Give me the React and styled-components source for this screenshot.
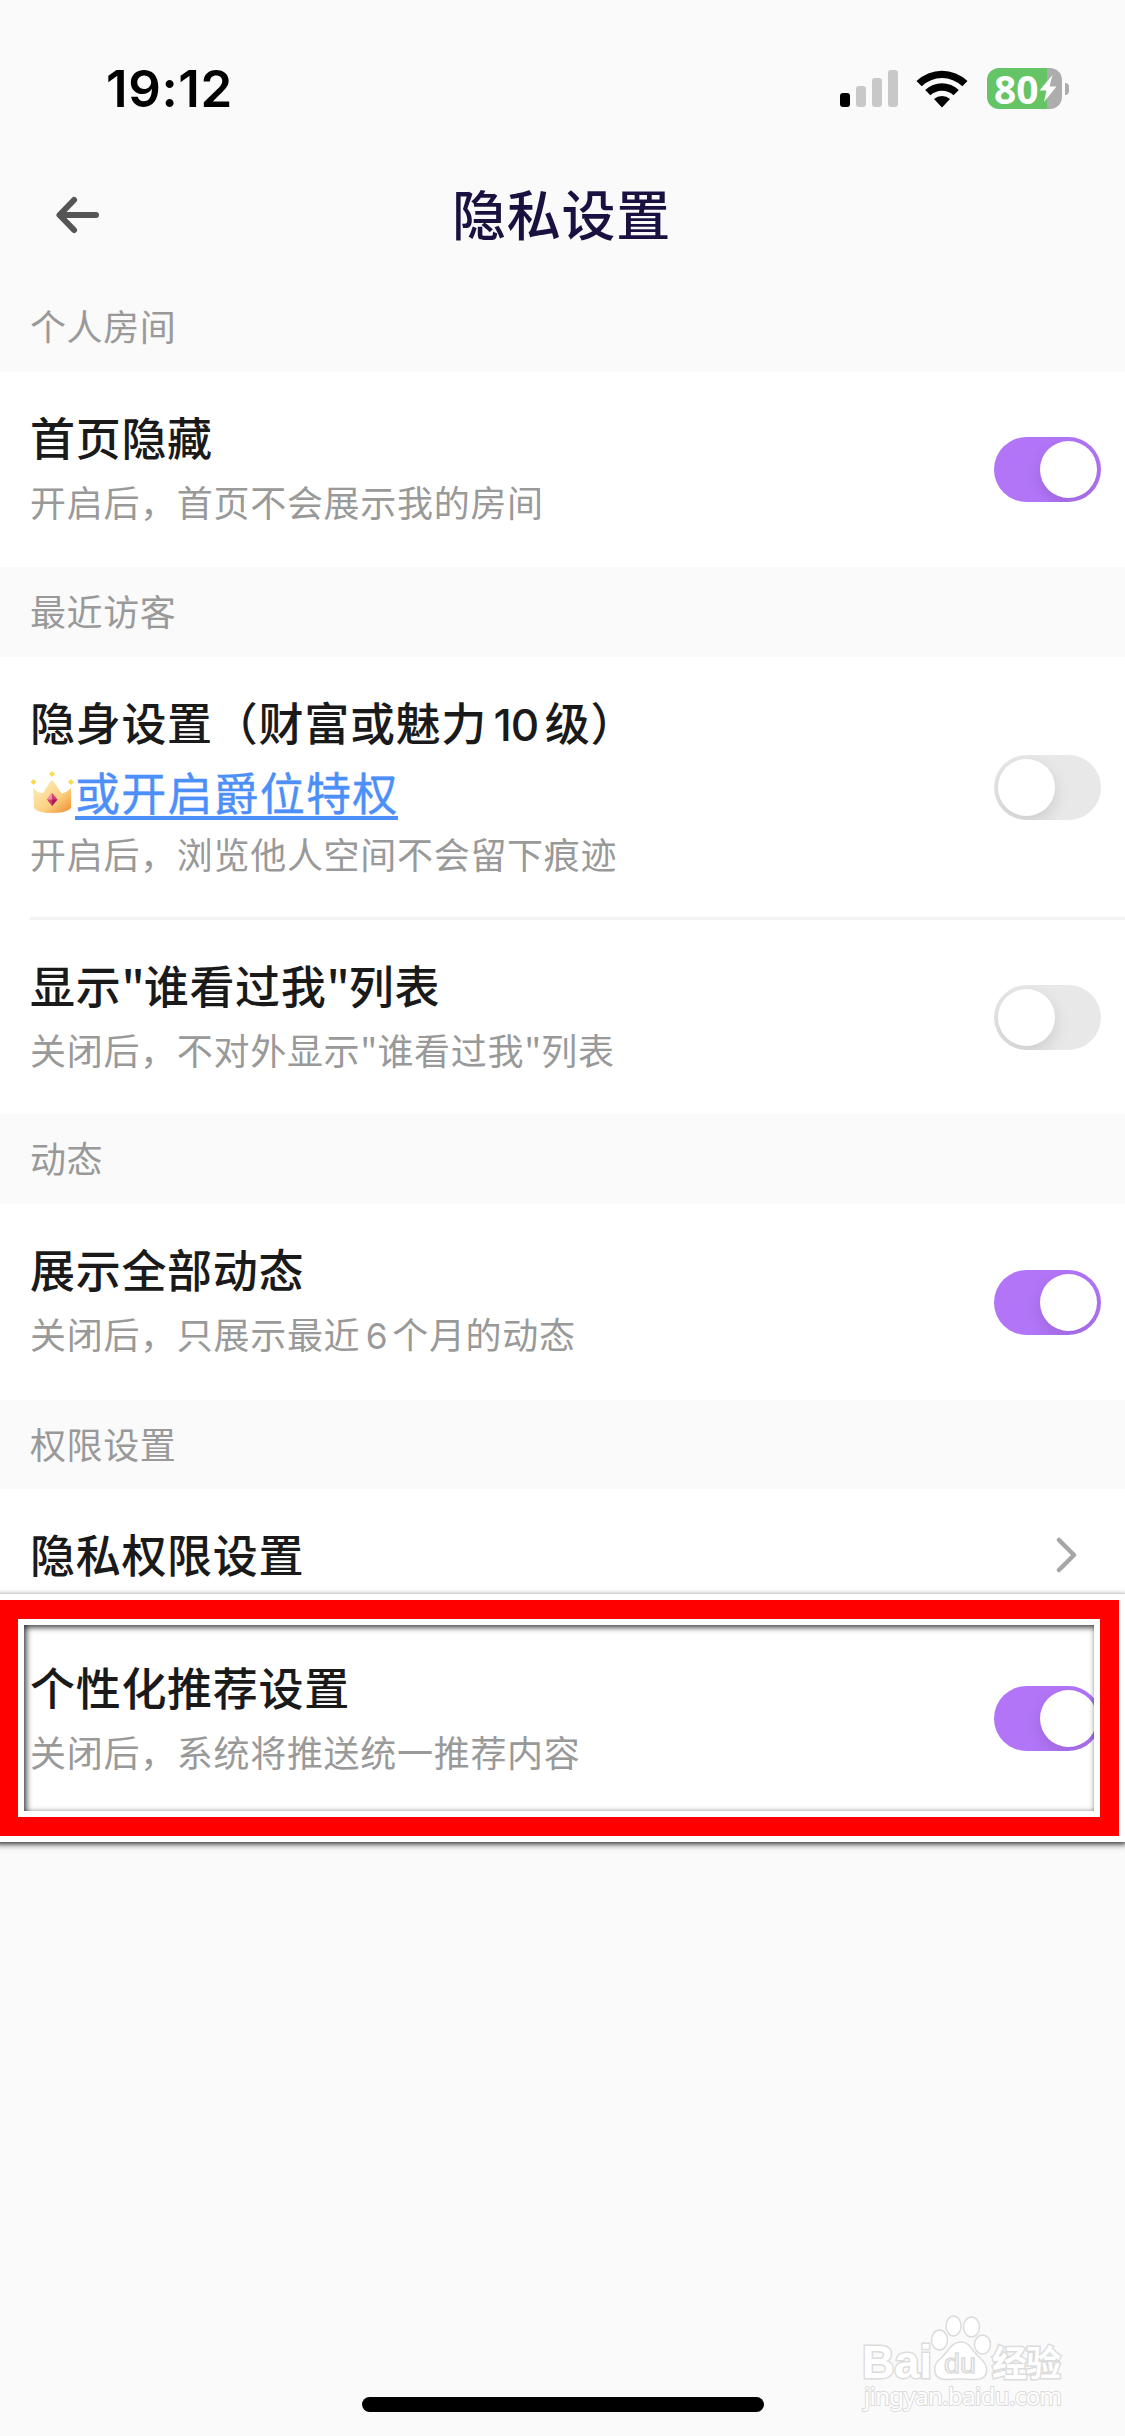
import styled, { createGlobalStyle } from 'styled-components'

const GlobalStyle = createGlobalStyle`
    * {
        box-sizing: border-box;
    }

    body {
        margin: 0;
        background: #fafafa;
        font-family: 'Noto Sans CJK SC', sans-serif;
    }
`

const Page = styled.div`
    position: relative;
    display: flex;
    flex-direction: column;
    width: 1125px;
    height: 2436px;
    overflow: hidden;
    background: #fafafa;
`

const StatusBar = styled.header`
    display: flex;
    align-items: center;
    justify-content: space-between;
    height: 146px;
    padding: 31px 56px 0 106px;
`

const Time = styled.span`
    font-family: 'Inter', sans-serif;
    font-size: 51px;
    font-weight: 600;
    letter-spacing: 0.6px;
    line-height: 60px;
    color: #000;
`

const StatusIcons = styled.div`
    display: flex;
    align-items: center;
    gap: 19px;
`

const Signal = styled.div`
    display: flex;
    align-items: flex-end;
    gap: 6px;
    height: 37px;
    margin-right: -1px;
`

const SignalBar = styled.i`
    width: 10px;
    height: ${({ $height }) => $height}px;
    border-radius: 3px;
    background: ${({ $on }) => ($on ? '#000' : '#c8c8c8')};
`

const BatteryWrapper = styled.div`
    display: flex;
    align-items: center;
    gap: 3px;
`

const BatteryBody = styled.div`
    display: flex;
    align-items: center;
    width: 75px;
    height: 41px;
    padding-left: 7px;
    border-radius: 12px;
    background: linear-gradient(to right, #65c466 60px, #adadad 60px);
    font-family: 'Noto Sans', sans-serif;
    font-size: 39px;
    font-weight: 700;
    line-height: 39px;
    color: #fff;
`

const BatteryCap = styled.i`
    width: 4px;
    height: 12px;
    border-radius: 0 4px 4px 0;
    background: #adadad;
`

const NavBar = styled.nav`
    display: grid;
    grid-template-columns: 200px 1fr 200px;
    align-items: center;
    height: 136px;
`

const BackButton = styled.button`
    display: flex;
    padding: 2px 0 0 55px;
    border: none;
    background: none;
`

const NavTitle = styled.h1`
    margin: 0;
    padding: 0 2px 3px 0;
    font-size: 54px;
    font-weight: 500;
    letter-spacing: 0.8px;
    line-height: 80px;
    text-align: center;
    color: #1b1140;
`

const SectionTitle = styled.h2`
    margin: 0;
    height: ${({ $height }) => $height || 90}px;
    padding-left: 30px;
    font-size: 36px;
    font-weight: 400;
    letter-spacing: 0.6px;
    line-height: 86px;
    color: #999;
`

const Row = styled.div`
    display: flex;
    align-items: center;
    justify-content: space-between;
    height: ${({ $height }) => $height || 195}px;
    padding: 0 24px 0 30px;
    background: #fff;
`

const Divider = styled.hr`
    width: 100%;
    height: 3px;
    margin: 0;
    border: none;
    border-left: 30px solid #fff;
    background: #f3f3f3;
`

const RowText = styled.div`
    display: flex;
    flex-direction: column;
    padding-bottom: ${({ $lift }) => $lift ?? 3}px;
`

const RowTitle = styled.span`
    font-size: 45px;
    font-weight: 500;
    letter-spacing: 0.7px;
    line-height: 66px;
    white-space: nowrap;
    color: #1a1a1a;
`

const RowHint = styled.span`
    font-size: 36px;
    letter-spacing: 0.7px;
    line-height: ${({ $height }) => $height || 62}px;
    white-space: nowrap;
    color: #999;
`

const Num = styled.span`
    margin: 0 ${({ $gap }) => $gap}px;
    font-family: 'Inter', sans-serif;
    font-size: 0.98em;
    letter-spacing: -1px;
`

const Quote = styled.span`
    letter-spacing: ${({ $tight }) => ($tight ? -1 : 0)}px;
`

const LinkLine = styled.div`
    display: flex;
    align-items: center;
    height: 70px;
`

const Link = styled.a`
    height: 56px;
    margin-bottom: 2px;
    border-bottom: 4px solid #4d8ff9;
    font-size: 45px;
    letter-spacing: 1.2px;
    line-height: 55px;
    color: #4d8ff9;
    -webkit-text-stroke: 0.4px #4d8ff9;
`

const Track = styled.button`
    display: flex;
    flex: none;
    justify-content: ${({ $on }) => ($on ? 'flex-end' : 'flex-start')};
    width: 107px;
    height: 65px;
    padding: 4px;
    border: none;
    border-radius: 33px;
    overflow: hidden;
    background: ${({ $on }) => ($on ? '#b275f8' : '#e8e8e8')};
`

const Knob = styled.i`
    width: 57px;
    height: 57px;
    border-radius: 50%;
    background: #fff;
    box-shadow: 0 6px 16px rgba(0, 0, 0, 0.12);
`

const ChevronBox = styled.div`
    display: flex;
    margin-right: 24px;
`

// red annotation box lying over the last row
const MarkOuter = styled.div`
    position: absolute;
    top: 1594px;
    left: -7px;
    width: 1132px;
    height: 248px;
    border: 6px solid #fff;
    box-shadow: 2px 2px 6px rgba(0, 0, 0, 0.85);
`

const MarkRed = styled.div`
    height: 100%;
    border: 19px solid #ff0000;
`

const MarkInner = styled.div`
    height: 100%;
    border: 6px solid #fff;
`

const MarkShade = styled.div`
    height: 100%;
    box-shadow: inset 2px 2px 6px rgba(0, 0, 0, 0.85);
`

const Watermark = styled.div`
    position: absolute;
    top: 2310px;
    left: 860px;
`

const HomeIndicator = styled.div`
    width: 402px;
    height: 15px;
    margin: auto auto 24px 362px;
    border-radius: 8px;
    background: #000;
`

const Switch = ({ on }) => (
    <Track type="button" role="switch" aria-checked={!!on} $on={on}>
        <Knob />
    </Track>
)

const Wifi = () => (
    <svg width="52" height="38" viewBox="0 0 52 38">
        <path d="M0.5 11 A37 37 0 0 1 51.5 11 L46.3 16.2 A29.5 29.5 0 0 0 5.7 16.2 Z" />
        <path d="M9.2 20 A24.5 24.5 0 0 1 42.8 20 L37.6 25.2 A17 17 0 0 0 14.4 25.2 Z" />
        <path d="M18 29 A12 12 0 0 1 34 29 L26 37.5 Z" />
    </svg>
)

const Crown = () => (
    <svg width="45" height="44" viewBox="0 0 45 44">
        <defs>
            <linearGradient id="crown" x1="0" y1="0" x2="1" y2="1">
                <stop offset="0.2" stopColor="#fbe7ac" />
                <stop offset="0.6" stopColor="#fbd080" />
                <stop offset="1" stopColor="#f08c2c" />
            </linearGradient>
        </defs>
        <path d="M3 17 Q9 23 13 22 L20 11 Q22 8 24 11 L31 22 Q35 23 41 17 V37 Q37 42 22 42 Q7 42 4 37 Z" fill="url(#crown)" />
        <path d="M22 0.500 L24.500 3 L22 5.500 L19.500 3 Z M3.500 8.500 L6 11 L3.500 13.500 L1 11 Z M41 8.500 L43.500 11 L41 13.500 L38.500 11 Z" fill="#fadb50" stroke="#fadb50" strokeLinejoin="round" />
        <path d="M22 22 L27.500 28.500 L22 35 L17 28.500 Z" fill="#d83a6c" />
        <path d="M22 22 L22 28.500 L17 28.500 Z" fill="#ef93ab" />
        <path d="M22 35 L22 28.500 L27.500 28.500 Z" fill="#a82050" />
    </svg>
)

const BaiduLogo = () => (
    <svg width="210" height="110" viewBox="0 0 210 110" fill="#fff" stroke="#dcdcdc" strokeWidth="1.500">
        <g fontFamily="Liberation Sans" fontWeight="700" paintOrder="stroke" strokeWidth="3">
            <text x="2" y="68" fontSize="46" textLength="70" lengthAdjust="spacingAndGlyphs">Bai</text>
            <text x="132" y="66" fontSize="35" fontWeight="700" fontFamily="Noto Sans CJK SC" textLength="69">经验</text>
            <text x="4" y="95" fontSize="24" fontFamily="Noto Sans" fontWeight="400" textLength="198" strokeWidth="2">jingyan.baidu.com</text>
        </g>
        <ellipse cx="79.500" cy="30" rx="8" ry="10" />
        <ellipse cx="93.500" cy="16" rx="7.500" ry="10" />
        <ellipse cx="111.500" cy="17" rx="8" ry="10" />
        <ellipse cx="122.500" cy="34.500" rx="8" ry="9.500" />
        <path d="M101 32 C110 32 112 41 119 47 C131 57 128 69.500 116 69.500 C108 69.500 105 69 100 69 C94 69 92 69.500 86 69.500 C73 69.500 71 56 81 48 C89 41 91 32 101 32 Z" />
        <text x="84" y="63" fontFamily="Liberation Sans" fontSize="27" textLength="32" lengthAdjust="spacingAndGlyphs">du</text>
    </svg>
)

const App = () => {
    return (
        <Page>
            <GlobalStyle />
            <StatusBar>
                <Time>19:12</Time>
                <StatusIcons>
                    <Signal>
                        <SignalBar $height={14} $on />
                        <SignalBar $height={21} />
                        <SignalBar $height={29} />
                        <SignalBar $height={37} />
                    </Signal>
                    <Wifi />
                    <BatteryWrapper>
                        <BatteryBody>
                            80
                            <svg width="18" height="27" viewBox="0 0 17 27" fill="#fff">
                                <path d="M13 0 L0 15.500 H7 L4.500 27 L17 11.500 H10 Z" />
                            </svg>
                        </BatteryBody>
                        <BatteryCap />
                    </BatteryWrapper>
                </StatusIcons>
            </StatusBar>
            <NavBar>
                <BackButton type="button">
                    <svg width="46" height="40" viewBox="0 0 46 40" fill="none" stroke="#555" strokeWidth="6" strokeLinecap="round" strokeLinejoin="round">
                        <path d="M41 20 H5 M19 5 L4.500 20 L19 35" />
                    </svg>
                </BackButton>
                <NavTitle>隐私设置</NavTitle>
            </NavBar>

            <SectionTitle>个人房间</SectionTitle>
            <Row>
                <RowText>
                    <RowTitle>首页隐藏</RowTitle>
                    <RowHint>开启后，首页不会展示我的房间</RowHint>
                </RowText>
                <Switch on />
            </Row>

            <SectionTitle>最近访客</SectionTitle>
            <Row $height={260}>
                <RowText $lift={8}>
                    <RowTitle>隐身设置（财富或魅力<Num $gap={6.5}>10</Num>级）</RowTitle>
                    <LinkLine>
                        <Crown />
                        <Link>或开启爵位特权</Link>
                    </LinkLine>
                    <RowHint $height={50}>开启后，浏览他人空间不会留下痕迹</RowHint>
                </RowText>
                <Switch />
            </Row>
            <Divider />
            <Row $height={194}>
                <RowText>
                    <RowTitle>显示<Quote $tight>"</Quote>谁看过我<Quote $tight>"</Quote>列表</RowTitle>
                    <RowHint>关闭后，不对外显示<Quote>"</Quote>谁看过我<Quote>"</Quote>列表</RowHint>
                </RowText>
                <Switch />
            </Row>

            <SectionTitle>动态</SectionTitle>
            <Row $height={196}>
                <RowText $lift={1}>
                    <RowTitle>展示全部动态</RowTitle>
                    <RowHint>关闭后，只展示最近<Num $gap={5.5}>6</Num>个月的动态</RowHint>
                </RowText>
                <Switch on />
            </Row>

            <SectionTitle $height={89}>权限设置</SectionTitle>
            <Row $height={131}>
                <RowText $lift={1}>
                    <RowTitle>隐私权限设置</RowTitle>
                </RowText>
                <ChevronBox>
                    <svg width="22" height="38" viewBox="0 0 22 38" fill="none" stroke="#a6a6a6" strokeWidth="4.500" strokeLinecap="round" strokeLinejoin="round">
                        <path d="M4 4 L19 19 L4 34" />
                    </svg>
                </ChevronBox>
            </Row>
            <Row $height={197}>
                <RowText $lift={2}>
                    <RowTitle>个性化推荐设置</RowTitle>
                    <RowHint>关闭后，系统将推送统一推荐内容</RowHint>
                </RowText>
                <Switch on />
            </Row>

            <HomeIndicator />

            <MarkOuter>
                <MarkRed>
                    <MarkInner>
                        <MarkShade />
                    </MarkInner>
                </MarkRed>
            </MarkOuter>
            <Watermark>
                <BaiduLogo />
            </Watermark>
        </Page>
    )
}

export default App
